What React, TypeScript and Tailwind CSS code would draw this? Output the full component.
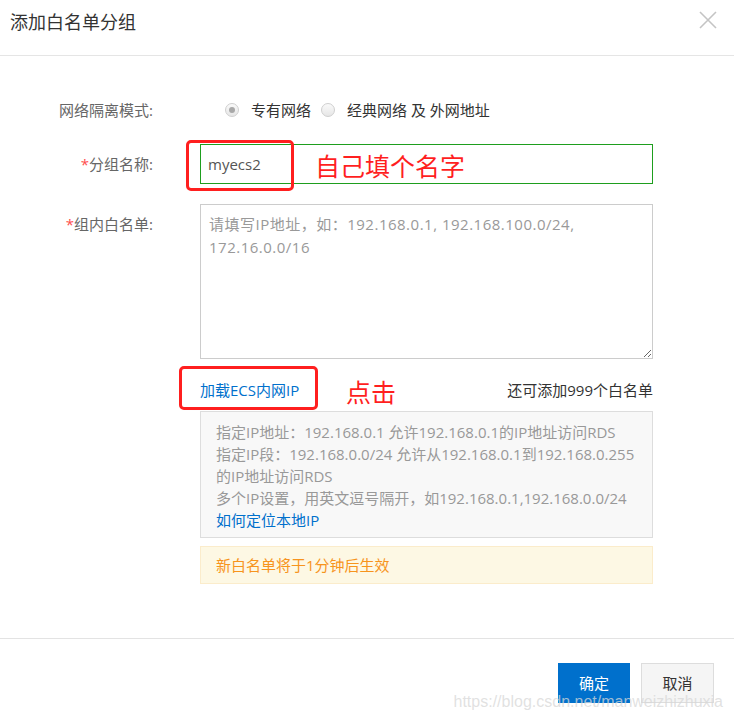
import React from "react";

const font = { fontFamily: '"Open Sans", "Noto Sans CJK SC", sans-serif' };

export default function App() {
  return (
    <div
      className="relative w-[734px] h-[720px] bg-white overflow-hidden text-[#333]"
      style={font}
    >
      {/* Header */}
      <div className="h-[56px] border-b border-[#e5e5e5] flex items-start justify-between pl-[10px] pr-[16px]">
        <div className="text-[18px] leading-[44px] text-[#333]">添加白名单分组</div>
        <svg width="20" height="20" viewBox="0 0 20 20" className="mt-[10px]">
          <path d="M2 2 L18 18 M18 2 L2 18" stroke="#c4c4c4" strokeWidth="1.6" fill="none" />
        </svg>
      </div>

      {/* Body */}
      <div className="h-[583px] border-b border-[#e3e3e3] flex flex-col">
        {/* radio row */}
        <div className="mt-[44px] h-[20px] flex items-center">
          <div className="w-[153px] text-right text-[15px] text-[#666]">网络隔离模式:</div>
          <div className="ml-[72px] flex items-center text-[15px] text-[#333]">
            <span className="w-[14px] h-[14px] rounded-full border border-[#cfcfcf] bg-gradient-to-b from-[#fafafa] to-[#e6e6e6] flex items-center justify-center">
              <span className="w-[6px] h-[6px] rounded-full bg-[#a8a8a8]" />
            </span>
            <span className="ml-[12px]">专有网络</span>
            <span className="ml-[10px] w-[14px] h-[14px] rounded-full border border-[#cfcfcf] bg-gradient-to-b from-[#fafafa] to-[#e6e6e6]" />
            <span className="ml-[12px]">经典网络 及 外网地址</span>
          </div>
        </div>

        {/* name row */}
        <div className="mt-[24px] flex items-start">
          <div className="w-[153px] h-[40px] flex items-center justify-end text-[15px] text-[#666]">
            <span className="text-[#ff4d4d]">*</span>分组名称:
          </div>
          <div className="ml-[47px] w-[453px] h-[40px] border border-[#1e9e1e] flex items-center pl-[7px] text-[15px] text-[#555]">
            myecs2
          </div>
        </div>

        {/* whitelist row */}
        <div className="mt-[20px] flex items-start">
          <div className="w-[153px] mt-[10px] h-[20px] flex items-center justify-end text-[15px] text-[#666]">
            <span className="text-[#ff4d4d]">*</span>组内白名单:
          </div>
          <textarea
            className="ml-[47px] w-[453px] h-[155px] border border-[#ccc] pl-[8px] pr-[8px] pt-[8px] text-[15px] leading-[23px] tracking-[0.5px] text-[#333] placeholder:text-[#999] outline-none"
            style={font}
            placeholder={"请填写IP地址，如：192.168.0.1, 192.168.100.0/24, 172.16.0.0/16"}
          />
        </div>

        {/* link row */}
        <div className="mt-[21px] h-[20px] flex items-center">
          <div className="w-[153px]" />
          <div className="ml-[47px] w-[453px] flex items-center justify-between text-[15px]">
            <span className="text-[#0070cc]">加载ECS内网IP</span>
            <span className="text-[#333]">还可添加999个白名单</span>
          </div>
        </div>

        {/* info box */}
        <div className="mt-[11px] flex">
          <div className="w-[153px]" />
          <div className="ml-[47px] w-[453px] h-[127px] border border-[#ddd] bg-[#f8f8f8] pl-[15px] pt-[9px] text-[15px] leading-[22px] text-[#999]">
            <div>指定IP地址：192.168.0.1 允许192.168.0.1的IP地址访问RDS</div>
            <div>指定IP段：192.168.0.0/24 允许从192.168.0.1到192.168.0.255</div>
            <div>的IP地址访问RDS</div>
            <div className="whitespace-nowrap">多个IP设置，用英文逗号隔开，如192.168.0.1,192.168.0.0/24</div>
            <div className="text-[#0070cc]">如何定位本地IP</div>
          </div>
        </div>

        {/* warning */}
        <div className="mt-[8px] flex">
          <div className="w-[153px]" />
          <div className="ml-[47px] w-[453px] h-[38px] border border-[#fbeccb] bg-[#fdf8e4] flex items-center pl-[15px] text-[15px] text-[#f7941d]">
            新白名单将于1分钟后生效
          </div>
        </div>
      </div>

      {/* Footer */}
      <div className="flex justify-end pt-[24px] pr-[20px] gap-[11px]">
        <button className="w-[72px] h-[40px] bg-[#0070cc] text-white text-[15px]" style={font}>
          确定
        </button>
        <button className="w-[73px] h-[40px] bg-[#f5f5f5] border border-[#ddd] text-[#333] text-[15px]" style={font}>
          取消
        </button>
      </div>

      {/* Annotations (overlay) */}
      <div className="absolute left-[186px] top-[140px] w-[108px] h-[51px] border-[3px] border-[#ff1f1f] rounded-[5px]" />
      <div className="absolute left-[315px] top-[147px] text-[25px] leading-[36px] text-[#ff1f1f]" style={{ fontFamily: '"Noto Sans CJK SC", sans-serif' }}>
        自己填个名字
      </div>
      <div className="absolute left-[179px] top-[366px] w-[139px] h-[44px] border-[3px] border-[#ff1f1f] rounded-[5px]" />
      <div className="absolute left-[346px] top-[373px] text-[25px] leading-[36px] text-[#ff1f1f]" style={{ fontFamily: '"Noto Sans CJK SC", sans-serif' }}>
        点击
      </div>

      {/* Watermark */}
      <div
        className="absolute right-[11px] top-[690px] text-[16px] leading-[24px] text-[rgba(215,215,215,0.75)] pointer-events-none"
        style={{ fontFamily: '"Liberation Sans", Arial, sans-serif' }}
      >
        https://blog.csdn.net/manweizhizhuxia
      </div>
    </div>
  );
}
